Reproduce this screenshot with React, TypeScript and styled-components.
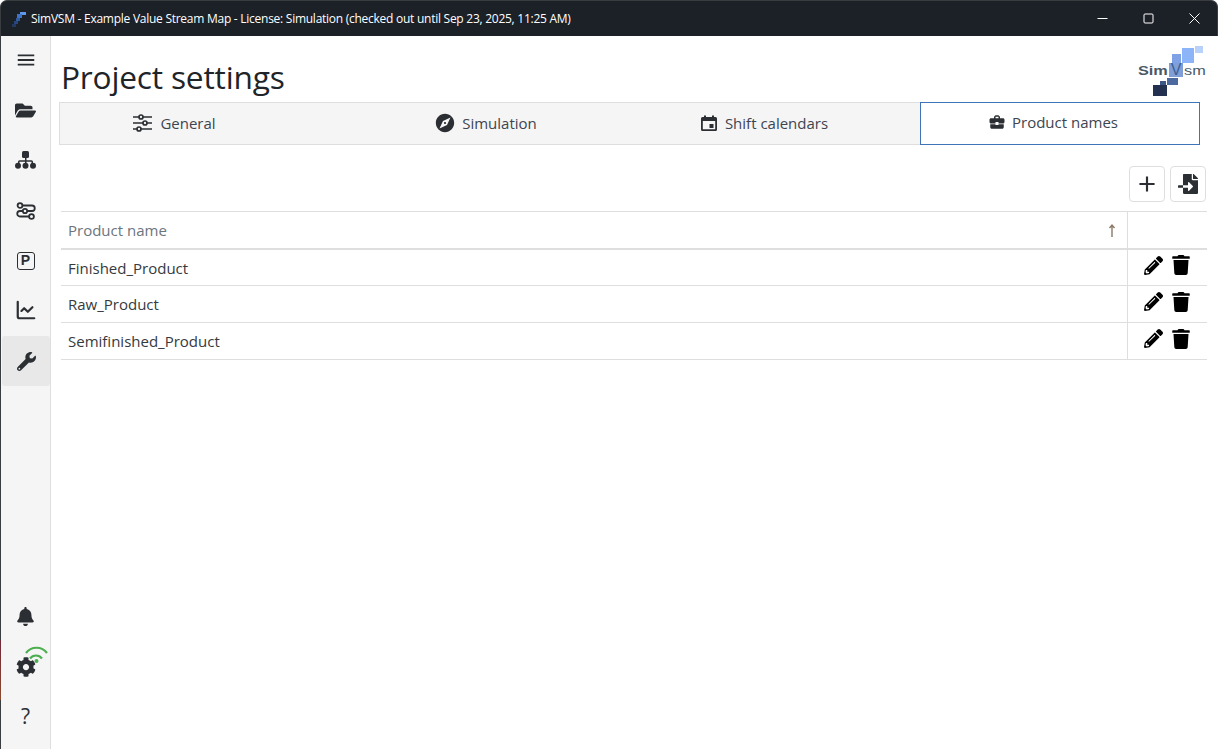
import React from 'react';
import styled, { createGlobalStyle } from 'styled-components';
import { FaFolderOpen, FaWrench, FaBell, FaCog, FaTrash, FaPencilAlt, FaFileImport } from 'react-icons/fa';
import { MdMenu, MdExplore, MdBusinessCenter, MdAdd } from 'react-icons/md';
import { LuChartLine } from 'react-icons/lu';

const Global = createGlobalStyle`
  html, body { margin: 0; padding: 0; height: 100%; background: #fff; overflow: hidden; }
  #root { height: 100%; }
  * { box-sizing: border-box; }
`;

const Win = styled.div`
  width: 1218px; height: 749px; display: flex; flex-direction: column; position: relative;
  font-family: "Open Sans", "Noto Sans", sans-serif; color: #212529; background: #fff;
`;
const TitleBar = styled.header`
  height: 36px; flex: none; background: #1c2128; color: #fff; display: flex; align-items: center;
  padding-left: 10px; font-size: 12px; letter-spacing: -0.26px; border-radius: 7px 7px 0 0; border: 1px solid #3a3d40; border-bottom: 0;
`;
const AppMark = styled.svg` width: 16px; height: 16px; margin-right: 4px; flex: none; `;
const TitleText = styled.span` flex: 1; white-space: nowrap; `;
const WinButtons = styled.div` display: flex; align-items: center; height: 100%; `;
const WinButton = styled.div`
  width: 46px; height: 100%; display: flex; align-items: center; justify-content: center;
`;
const Body = styled.div` flex: 1; display: flex; min-height: 0; border-left: 1px solid #3a3d40; `;
const EdgeTint = styled.div`
  position: absolute; left: 0; top: 640px; width: 1px; height: 60px; background: linear-gradient(#6e2a3a, #8a4a30);
`;
const Side = styled.nav`
  width: 50px; flex: none; background: #f5f5f5; border-right: 1px solid #dedede;
  display: flex; flex-direction: column; align-items: stretch;
`;
const SideItem = styled.div<{ $active?: boolean; $up?: boolean; $down?: boolean }>`
  height: 50px; flex: none; display: flex; align-items: center; justify-content: center; color: #2b2f33;
  position: relative; border-radius: 3px;
  padding-bottom: ${p => (p.$up ? 2 : 0)}px;
  padding-top: ${p => (p.$down ? 2 : 0)}px;
  margin-left: ${p => (p.$active ? 1 : 0)}px;
  background: ${p => (p.$active ? '#e8e8e8' : 'transparent')};
`;
const Spacer = styled.div` flex: 1; `;
const SideFoot = styled.div` height: 8px; flex: none; `;
const PBox = styled.div`
  width: 18px; height: 18px; border: 1.5px solid #2b2f33; border-radius: 3px; font: 700 14px/15px "Liberation Sans", sans-serif;
  text-align: center; color: #2b2f33;
`;
const Help = styled.span` font-size: 21px; line-height: 1; color: #2b2f33; `;
const Wifi = styled.svg` position: absolute; left: 24px; top: 4px; `;
const Main = styled.main` flex: 1; min-width: 0; padding: 0 11px 0 10px; display: flex; flex-direction: column; `;
const Head = styled.div` height: 66px; flex: none; display: flex; justify-content: space-between; position: relative; `;
const H1 = styled.h1`
  margin: 22px 0 0 0; font-size: 31.7px; line-height: 38px; font-weight: 500; color: #1f2429; letter-spacing: -0.2px;
`;
const Logo = styled.div` position: absolute; right: 0; top: 8px; width: 70px; height: 54px; `;
const LogoText = styled.span<{ $left: number; $bold?: boolean }>`
  position: absolute; left: ${p => p.$left}px; top: 20px; font-family: "Liberation Sans", sans-serif; font-size: 12.5px; line-height: 14px;
  font-weight: ${p => (p.$bold ? 700 : 400)}; color: #4b5866; transform: scaleX(1.3); transform-origin: left center;
`;
const LogoV = styled.span`
  position: absolute; left: 32px; top: 19px; width: 14px; height: 14px; background: #7f9fd6;
  font: 400 16px/14px "Liberation Sans", sans-serif; color: #3c5f98; text-align: center;
`;
const LogoArt = styled.svg` position: absolute; left: 0; top: 0; `;
const Tabs = styled.div`
  margin-left: -2px; width: 1141px; height: 43px; flex: none; display: grid; grid-template-columns: 285px 289px 287px 278px;
  background: #f5f5f5; border: 1px solid #dedede;
`;
const Tab = styled.div<{ $active?: boolean; $right?: number }>`
  display: flex; align-items: center; justify-content: center; gap: 8px; font-size: 15px; color: #3d4550;
  padding-right: ${p => p.$right ?? 0}px; padding-bottom: 2px;
  ${p => p.$active ? 'background:#fff; border:1px solid #3f74b8; margin:-1px; padding-bottom:3px;' : ''}
`;
const TabGlyph = styled.span`
  display: flex; margin: 0 -2px 0 -2px; color: #2b2f33;
`;
const Toolbar = styled.div` height: 66px; flex: none; display: flex; justify-content: flex-end; align-items: flex-start; gap: 5px; padding: 21px 1px 0 0; `;
const ToolButton = styled.button`
  width: 36px; height: 36px; padding: 0; background: #fff; border: 1px solid #dedede; border-radius: 4px; color: #2b2f33;
  display: flex; align-items: center; justify-content: center;
`;
const Table = styled.div` width: 1146px; flex: none; border-top: 1px solid #dedede; `;
const Row = styled.div<{ $header?: boolean; $first?: boolean }>`
  display: grid; grid-template-columns: 1066px 80px; height: ${p => (p.$header ? 38 : p.$first ? 36 : 37)}px;
  border-bottom: ${p => (p.$header ? '2px solid #dedede' : '1px solid #dedede')};
`;
const NameCell = styled.div<{ $header?: boolean }>`
  padding: 0 7px; display: flex; align-items: center; justify-content: space-between; font-size: 15px;
  color: ${p => (p.$header ? '#6c757d' : '#343a40')};
`;
const ActionCell = styled.div`
  border-left: 1px solid #dedede; display: flex; align-items: center; gap: 8px; padding-left: 16px; color: #000; padding-bottom: 5px;
`;
const Arrow = styled.svg` margin-right: 4px; `;

const names = ['Finished_Product', 'Raw_Product', 'Semifinished_Product'];

export default function App() {
  return (
    <Win>
      <Global />
      <TitleBar>
        <AppMark viewBox="0 0 16 16">
          <rect x="9" y="1" width="6" height="3" fill="#5f97ea" />
          <rect x="6" y="3" width="5" height="4" fill="#3f74c4" />
          <rect x="5" y="7" width="4" height="3" fill="#2f5aa0" />
          <rect x="3" y="10" width="4" height="3" fill="#26487e" />
          <rect x="1" y="13" width="4" height="3" fill="#223a62" />
        </AppMark>
        <TitleText>SimVSM - Example Value Stream Map - License: Simulation (checked out until Sep 23, 2025, 11:25 AM)</TitleText>
        <WinButtons>
          <WinButton><svg width="11" height="11" viewBox="0 0 11 11"><path d="M0.500 5.500h10" stroke="#fff" /></svg></WinButton>
          <WinButton><svg width="11" height="11" viewBox="0 0 11 11"><rect x="1" y="1" width="9" height="9" rx="1" fill="none" stroke="#fff" /></svg></WinButton>
          <WinButton><svg width="11" height="11" viewBox="0 0 11 11"><path d="M.5.5l10 10M10.500.5l-10 10" stroke="#fff" /></svg></WinButton>
        </WinButtons>
      </TitleBar>
      <Body>
        <Side>
          <SideItem $up><MdMenu size={22} /></SideItem>
          <SideItem $up><FaFolderOpen size={21} /></SideItem>
          <SideItem $up>
            <svg width="21" height="18" viewBox="0 0 21 18" fill="#2b2f33">
              <rect x="7" y="0" width="7" height="7" rx="1.500" />
              <rect x="10" y="6" width="1.500" height="6" />
              <path d="M3 13v-2.200a1.500 1.500 0 0 1 1.500-1.500h12a1.500 1.500 0 0 1 1.500 1.500V13h-1.500v-2.200h-12V13z" />
              <circle cx="3" cy="14.800" r="3" /><circle cx="10.500" cy="14.800" r="3" /><circle cx="18" cy="14.800" r="3" />
            </svg>
          </SideItem>
          <SideItem>
            <svg width="20" height="18" viewBox="0 0 20 18" fill="none" stroke="#2b2f33" strokeWidth="1.800">
              <circle cx="4" cy="3.500" r="2.400" /><circle cx="9" cy="9" r="2.200" /><circle cx="15.500" cy="14.500" r="2.400" />
              <path d="M6.400 3.500H16a2.700 2.700 0 0 1 0 5.500H11.200M6.800 9H4a2.700 2.700 0 0 0 0 5.500H13" />
            </svg>
          </SideItem>
          <SideItem><PBox>P</PBox></SideItem>
          <SideItem $up><LuChartLine size={22} strokeWidth={2.4} /></SideItem>
          <SideItem $active><FaWrench size={19} /></SideItem>
          <Spacer />
          <SideItem><FaBell size={19} /></SideItem>
          <SideItem $down>
            <FaCog size={20} />
            <Wifi width="24" height="22" viewBox="0 0 24 22" fill="none" stroke="#4caf50" strokeWidth="2.200">
              <path d="M1 8C6 1 17 1 22 8" />
              <path d="M5 13.500C8 9.500 14 9.500 17 13.500" />
              <circle cx="11.500" cy="16" r="2" fill="#4caf50" stroke="none" />
            </Wifi>
          </SideItem>
          <SideItem><Help>?</Help></SideItem>
          <SideFoot />
        </Side>
        <Main>
          <Head>
            <H1>Project settings</H1>
            <Logo>
              <LogoArt width="70" height="54" viewBox="0 0 70 54">
                <rect x="35" y="10" width="9" height="9" fill="#7fa2e6" />
                <rect x="45" y="4" width="12" height="15" fill="#8cb4f8" />
                <rect x="58" y="2" width="8" height="7" fill="#b8d2fb" />
                <rect x="30" y="34" width="11" height="7" fill="#4c6a9f" />
                <rect x="23" y="37" width="6" height="4" fill="#3c5688" />
                <rect x="16" y="41" width="14" height="11" fill="#24304f" />
              </LogoArt>
              <LogoV>V</LogoV>
              <LogoText $left={1} $bold>Sim</LogoText>
              <LogoText $left={47}>sm</LogoText>
            </Logo>
          </Head>
          <Tabs>
            <Tab $right={56}>
              <svg width="19" height="18" viewBox="0 0 19 18" fill="none" stroke="#2b2f33" strokeWidth="1.700">
                <path d="M0 3h6M10 3h9M0 9h10M14 9h5M0 15h4M8 15h11" />
                <circle cx="8" cy="3" r="2" /><circle cx="12" cy="9" r="2" /><circle cx="6" cy="15" r="2" />
              </svg>
              General
            </Tab>
            <Tab $right={6}><TabGlyph><MdExplore size={22} /></TabGlyph> Simulation</Tab>
            <Tab $right={26}>
              <svg width="16" height="16" viewBox="0 0 16 16" fill="#2b2f33">
                <path d="M3 .5h2V2h6V.5h2V2h1.500A1.500 1.500 0 0 1 16 3.500v11a1.500 1.500 0 0 1-1.500 1.500h-13A1.500 1.500 0 0 1 0 14.500v-11A1.500 1.500 0 0 1 1.500 2H3zM1.800 6v8.200h12.400V6z" fillRule="evenodd" />
                <rect x="8.500" y="9" width="4" height="4" />
              </svg>
              Shift calendars
            </Tab>
            <Tab $active $right={12}><TabGlyph><MdBusinessCenter size={18} /></TabGlyph> Product names</Tab>
          </Tabs>
          <Toolbar>
            <ToolButton aria-label="Add"><MdAdd size={26} /></ToolButton>
            <ToolButton aria-label="Import"><FaFileImport size={20} /></ToolButton>
          </Toolbar>
          <Table>
            <Row $header>
              <NameCell $header>
                Product name
                <Arrow width="8" height="15" viewBox="0 0 8 15" fill="none" stroke="#8a7a68" strokeWidth="1.400"><path d="M4 14V2M1.500 5L4 2l2.500 3" /></Arrow>
              </NameCell>
              <ActionCell />
            </Row>
            {names.map((n, i) => (
              <Row key={n} $first={i === 0}>
                <NameCell>{n}</NameCell>
                <ActionCell><FaPencilAlt size={19} /><FaTrash size={20} /></ActionCell>
              </Row>
            ))}
          </Table>
        </Main>
      </Body>
      <EdgeTint />
    </Win>
  );
}
